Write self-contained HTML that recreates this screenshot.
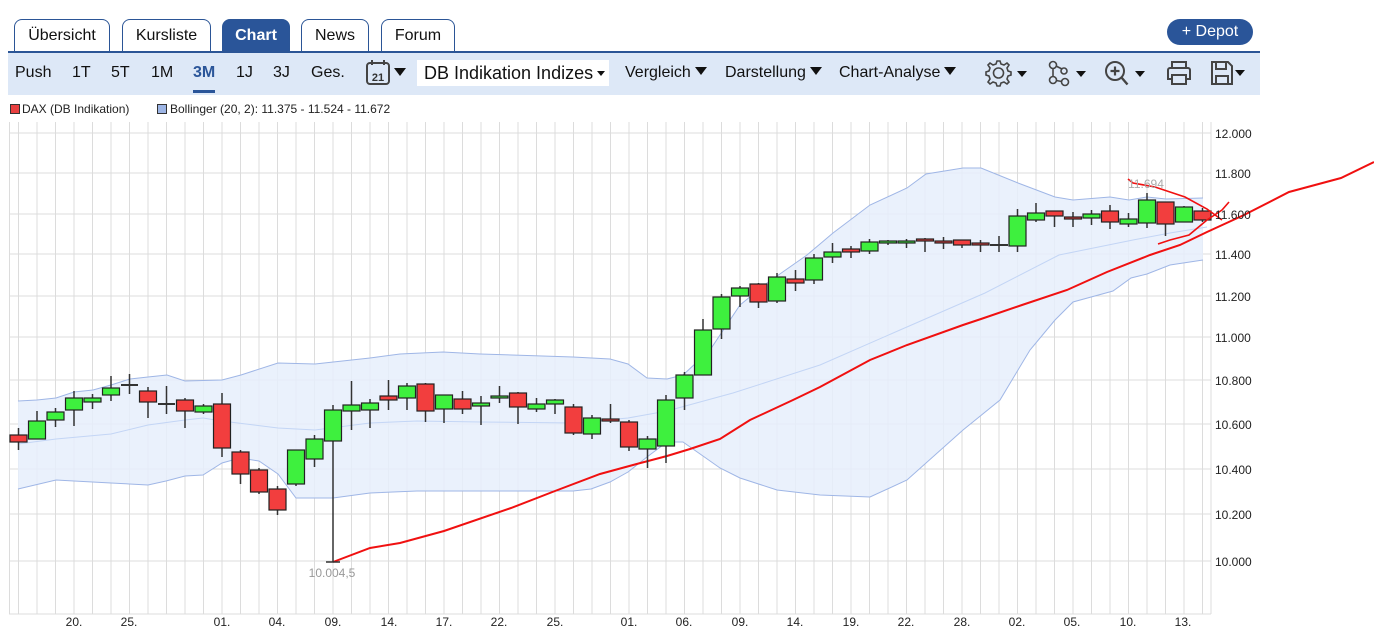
<!DOCTYPE html>
<html><head><meta charset="utf-8"><style>
body{margin:0;width:1374px;height:628px;background:#fff;font-family:"Liberation Sans",Arial,sans-serif;position:relative;overflow:hidden}
.tab{position:absolute;top:19px;height:32px;border:1px solid #2b5596;border-bottom:none;border-radius:8px 8px 0 0;background:#fff;font-size:16px;line-height:32px;text-align:center;color:#111;box-sizing:border-box}
.tab.on{background:#2a5599;color:#fff;font-weight:bold}
.bar{position:absolute;left:8px;top:51px;width:1252px;height:44px;background:#dde8f7;border-top:2px solid #2b5596;box-sizing:border-box}
.t{position:absolute;top:73px;transform:translateY(-50%);font-size:16px;color:#111}
.dd::after{content:"";display:inline-block;margin-left:4px;border-left:6px solid transparent;border-right:6px solid transparent;border-top:8px solid #111;vertical-align:2px}
</style></head><body>
<div class="tab" style="left:14px;width:96px">Übersicht</div>
<div class="tab" style="left:122px;width:89px">Kursliste</div>
<div class="tab on" style="left:222px;width:68px">Chart</div>
<div class="tab" style="left:301px;width:68px">News</div>
<div class="tab" style="left:381px;width:74px">Forum</div>
<div style="position:absolute;left:1167px;top:19px;width:86px;height:26px;border-radius:13px;background:#2a5599;color:#fff;font-size:16px;line-height:26px;text-align:center">+ Depot</div>
<div class="bar"></div>
<div class="t" style="left:15px">Push</div>
<div class="t" style="left:72px">1T</div>
<div class="t" style="left:111px">5T</div>
<div class="t" style="left:151px">1M</div>
<div class="t" style="left:193px;color:#2a5599;font-weight:bold">3M</div>
<div style="position:absolute;left:193px;top:90px;width:22px;height:3px;background:#2a5599"></div>
<div class="t" style="left:236px">1J</div>
<div class="t" style="left:273px">3J</div>
<div class="t" style="left:311px">Ges.</div>
<svg style="position:absolute;left:364px;top:59px" width="44" height="28" viewBox="0 0 44 28"><rect x="3" y="4" width="22" height="21" rx="3" fill="none" stroke="#444" stroke-width="2"/><line x1="8" y1="1" x2="8" y2="6" stroke="#444" stroke-width="2"/><line x1="20" y1="1" x2="20" y2="6" stroke="#444" stroke-width="2"/><text x="14" y="22" font-size="11" font-weight="bold" text-anchor="middle" fill="#333" font-family="Liberation Sans">21</text><path d="M30 9h12l-6 8z" fill="#111"/></svg>
<div style="position:absolute;left:417px;top:60px;width:192px;height:26px;background:#fff;font-size:18px;line-height:26px;padding-left:7px;box-sizing:border-box;color:#111">DB Indikation Indizes<span style="position:absolute;right:4px;top:11px;border-left:4px solid transparent;border-right:4px solid transparent;border-top:5px solid #111"></span></div>
<div class="t dd" style="left:625px">Vergleich</div>
<div class="t dd" style="left:725px">Darstellung</div>
<div class="t dd" style="left:839px">Chart-Analyse</div>
<svg style="position:absolute;left:984px;top:58px" width="275" height="30" viewBox="0 0 275 30" fill="none" stroke="#444" stroke-width="1.6">
<path d="M13 3l3 0 1 3 3 1 3-2 2 2-2 3 1 3 3 1v3l-3 1-1 3 2 3-2 2-3-2-3 1-1 3h-3l-1-3-3-1-3 2-2-2 2-3-1-3-3-1v-3l3-1 1-3-2-3 2-2 3 2 3-1z"/><circle cx="14.5" cy="15" r="5"/>
<path d="M33 13h10l-5 6z" fill="#111" stroke="none"/>
<circle cx="69" cy="7" r="3.5"/><circle cx="69" cy="22" r="3.5"/><circle cx="81" cy="24" r="3.5"/><circle cx="80" cy="13" r="3"/><path d="M69 10.5v8M72 22.5l6 1M72 8l6 3"/>
<path d="M92 13h10l-5 6z" fill="#111" stroke="none"/>
<circle cx="131" cy="13" r="9" stroke-width="2"/><path d="M137.5 19.5l6 7" stroke-width="2.4"/><path d="M131 8.5v9M126.5 13h9" stroke-width="2.2"/>
<path d="M151 13h10l-5 6z" fill="#111" stroke="none"/>
<path d="M188 10V4h14v6M186 10h18a2 2 0 0 1 2 2v9h-4M188 21h-4v-9a2 2 0 0 1 2-2M188 17h14v9h-14z" stroke-width="2"/>
<path d="M228 4h16l4 4v18h-20zM232 4v7h10V4M232 26v-8h12v8" stroke-width="2"/>
<path d="M251 12h10l-5 6z" fill="#111" stroke="none"/>
</svg>
<div style="position:absolute;left:10px;top:104px;width:8px;height:8px;background:#e84040;border:1px solid #333"></div>
<div style="position:absolute;left:22px;top:102px;font-size:12px;color:#222">DAX (DB Indikation)</div>
<div style="position:absolute;left:157px;top:104px;width:8px;height:8px;background:#9db5e5;border:1px solid #333"></div>
<div style="position:absolute;left:170px;top:102px;font-size:12px;color:#222">Bollinger (20, 2): 11.375 - 11.524 - 11.672</div>
<svg style="position:absolute;left:0;top:0" width="1374" height="628" viewBox="0 0 1374 628">
<g stroke="#dcdcdc" stroke-width="1">
<path d="M9 133H1211M9 173H1211M9 214H1211M9 254H1211M9 296H1211M9 337H1211M9 380H1211M9 424H1211M9 469H1211M9 514H1211M9 561H1211"/>
<path d="M9.5 122V614M18.5 122V614M37 122V614M55.5 122V614M74 122V614M92.5 122V614M111 122V614M129.5 122V614M148 122V614M166.5 122V614M185 122V614M203.5 122V614M222 122V614M240.5 122V614M259 122V614M277.5 122V614M296 122V614M314.5 122V614M333 122V614M351.5 122V614M370 122V614M388.5 122V614M407 122V614M425.5 122V614M444 122V614M462.5 122V614M481 122V614M499.5 122V614M518 122V614M536.5 122V614M555 122V614M573.5 122V614M592 122V614M610.5 122V614M629 122V614M647.5 122V614M666 122V614M684.5 122V614M703 122V614M721.5 122V614M740 122V614M758.5 122V614M777 122V614M795.5 122V614M814 122V614M832.5 122V614M851 122V614M869.5 122V614M888 122V614M906.5 122V614M925 122V614M943.5 122V614M962 122V614M980.5 122V614M999 122V614M1017.5 122V614M1036 122V614M1054.5 122V614M1073 122V614M1091.5 122V614M1110 122V614M1128.5 122V614M1147 122V614M1165.5 122V614M1184 122V614M1202.5 122V614M1211 122V614M9 614H1211"/>
</g>
<path fill="#e6eefc" fill-opacity="0.85" d="M18,401 37,400 56,398 74,392 93,390 111,385 130,379 148,377 167,375 185,381 222,380 241,375 278,363 315,364 370,358 400,354 443,352 480,354 573,357 610,359 628,364 647,378 667,379 683,375 710,350 740,305 767,283 807,255 833,233 870,205 907,188 926,174 963,168 981,168 1018,183 1055,197 1073,200 1110,197 1129,200 1147,197 1166,199 1203,198 L1203,260 1170,265 1147,274 1131,278 1113,291 1073,302 1055,320 1030,350 1000,400 963,430 907,480 870,497 820,495 777,490 740,478 720,468 683,442 667,442 647,457 628,472 610,482 591,489 573,491 417,491 370,493 333,498 296,498 278,474 259,461 240,458 222,463 203,475 185,476 166,481 148,485 111,483 74,481 56,480 18,489Z"/>
<g fill="none" stroke-width="1">
<polyline stroke="#9fb6e6" points="18,401 37,400 56,398 74,392 93,390 111,385 130,379 148,377 167,375 185,381 222,380 241,375 278,363 315,364 370,358 400,354 443,352 480,354 573,357 610,359 628,364 647,378 667,379 683,375 710,350 740,305 767,283 807,255 833,233 870,205 907,188 926,174 963,168 981,168 1018,183 1055,197 1073,200 1110,197 1129,200 1147,197 1166,199 1203,198"/>
<polyline stroke="#9fb6e6" points="18,489 56,480 74,481 111,483 148,485 166,481 185,476 203,475 222,463 240,458 259,461 278,474 296,498 333,498 370,493 417,491 573,491 591,489 610,482 628,472 647,457 667,442 683,442 720,468 740,478 777,490 820,495 870,497 907,480 963,430 1000,400 1030,350 1055,320 1073,302 1113,291 1131,278 1147,274 1170,265 1203,260"/>
<polyline stroke="#c3d5f5" points="18,444 56,439 111,434 148,425 185,420 203,418 222,421 278,428 315,430 370,423 417,421 480,422 573,423 628,418 667,411 733,393 820,365 900,330 985,293 1059,255 1133,240 1170,233 1207,227"/>
</g>
<polyline fill="none" stroke="#f01010" stroke-width="2" points="333,562 370,548 400,543 444,531 511,508 555,491 600,474 633,465 667,456 690,449 720,439 750,420 793,400 820,387 870,360 907,345 963,325 981,319 1022,305 1067,290 1107,272 1150,255 1180,245 1207,232 1244,215 1289,192 1341,178 1374,162"/>
<g stroke="#333" stroke-width="1.5">
<path d="M18.5 428V450M37 411V439M55.5 408V427M74 391V426M92.5 394V409M111 376V401M129.5 374V394M148 387V418M166.5 386V414M185 398V428M203.5 404V414M222 393V457M240.5 450V484M259 468V494M277.5 486V515M296 450V486M314.5 435V467M333 405V562M351.5 381V430M370 399V428M388.5 380V410M407 383V410M425.5 383V422M444 395V423M462.5 391V414M481 396V425M499.5 386V403M518 392V424M536.5 398V412M555 399V414M573.5 404V435M592 415V439M610.5 404V423M629 420V451M647.5 436V468M666 395V463M684.5 372V410M703 319V375M721.5 294V339M740 286V307M758.5 283V308M777 273V303M795.5 270V291M814 254V284M832.5 243V263M851 246V258M869.5 239V254M888 240V245M906.5 239V248M925 238V252M943.5 237V249M962 240V248M980.5 240V252M999 236V252M1017.5 209V252M1036 203V222M1054.5 211V227M1073 212V227M1091.5 210V225M1110 205V229M1128.5 213V227M1147 193V228M1165.5 202V236M1184 206V222M1202.5 208V222"/>
<path d="M121 385H138M158 404H175M990 245H1008" stroke-width="2"/>
<path d="M326 562H340"/>
</g>
<g stroke="#222" stroke-width="1.2">
<g fill="#f23e3e">
<rect x="10" y="435" width="17" height="7"/><rect x="139.5" y="391" width="17" height="11"/><rect x="176.5" y="400" width="17" height="11"/><rect x="213.5" y="404" width="17" height="44"/><rect x="232" y="452" width="17" height="22"/><rect x="250.5" y="470" width="17" height="22"/><rect x="269" y="489" width="17" height="21"/><rect x="380" y="396" width="17" height="4"/><rect x="417" y="384" width="17" height="27"/><rect x="454" y="399" width="17" height="10"/><rect x="509.5" y="393" width="17" height="14"/><rect x="565" y="407" width="17" height="26"/><rect x="602" y="419" width="17" height="2"/><rect x="620.5" y="422" width="17" height="25"/><rect x="750" y="284" width="17" height="18"/><rect x="787" y="279" width="17" height="4"/><rect x="842.5" y="249" width="17" height="3"/><rect x="916.5" y="239" width="17" height="2"/><rect x="935" y="241" width="17" height="2"/><rect x="953.5" y="240" width="17" height="5"/><rect x="972" y="243" width="17" height="2"/><rect x="1046" y="211" width="17" height="5"/><rect x="1064.5" y="217" width="17" height="2"/><rect x="1101.5" y="211" width="17" height="11"/><rect x="1157" y="202" width="17" height="22"/><rect x="1194" y="211" width="17" height="9"/>
</g>
<g fill="#3ef03e">
<rect x="28.5" y="421" width="17" height="18"/><rect x="47" y="412" width="17" height="8"/><rect x="65.5" y="398" width="17" height="12"/><rect x="84" y="398" width="17" height="4"/><rect x="102.5" y="388" width="17" height="7"/><rect x="195" y="406" width="17" height="6"/><rect x="287.5" y="450" width="17" height="34"/><rect x="306" y="439" width="17" height="20"/><rect x="324.5" y="410" width="17" height="31"/><rect x="343" y="405" width="17" height="6"/><rect x="361.5" y="403" width="17" height="7"/><rect x="398.5" y="386" width="17" height="12"/><rect x="435.5" y="395" width="17" height="14"/><rect x="472.5" y="403" width="17" height="3"/><rect x="491" y="396" width="17" height="2"/><rect x="528" y="404" width="17" height="5"/><rect x="546.5" y="400" width="17" height="4"/><rect x="583.5" y="418" width="17" height="16"/><rect x="639" y="439" width="17" height="10"/><rect x="657.5" y="400" width="17" height="46"/><rect x="676" y="375" width="17" height="23"/><rect x="694.5" y="330" width="17" height="45"/><rect x="713" y="297" width="17" height="32"/><rect x="731.5" y="288" width="17" height="8"/><rect x="768.5" y="277" width="17" height="24"/><rect x="805.5" y="258" width="17" height="22"/><rect x="824" y="252" width="17" height="5"/><rect x="861" y="242" width="17" height="9"/><rect x="879.5" y="241" width="17" height="2"/><rect x="898" y="241" width="17" height="2"/><rect x="1009" y="216" width="17" height="30"/><rect x="1027.5" y="213" width="17" height="7"/><rect x="1083" y="214" width="17" height="4"/><rect x="1120" y="219" width="17" height="5"/><rect x="1138.5" y="200" width="17" height="23"/><rect x="1175.5" y="207" width="17" height="15"/>
</g>
</g>
<g fill="none" stroke="#f01010" stroke-width="1.6">
<polyline points="1128,179 1133,183 1155,187 1185,197 1207,209 1222,220"/>
<polyline points="1158,244 1170,240 1189,235 1207,220 1222,210 1229,202"/>
</g>
<g font-family="Liberation Sans,Arial,sans-serif" font-size="12" fill="#222">
<text x="1215" y="138">12.000</text><text x="1215" y="178">11.800</text><text x="1215" y="219">11.600</text><text x="1215" y="259">11.400</text><text x="1215" y="301">11.200</text><text x="1215" y="342">11.000</text><text x="1215" y="385">10.800</text><text x="1215" y="429">10.600</text><text x="1215" y="474">10.400</text><text x="1215" y="519">10.200</text><text x="1215" y="566">10.000</text>
<g text-anchor="middle"><text x="74" y="626">20.</text><text x="129" y="626">25.</text><text x="222" y="626">01.</text><text x="277" y="626">04.</text><text x="333" y="626">09.</text><text x="389" y="626">14.</text><text x="444" y="626">17.</text><text x="499" y="626">22.</text><text x="555" y="626">25.</text><text x="629" y="626">01.</text><text x="684" y="626">06.</text><text x="740" y="626">09.</text><text x="795" y="626">14.</text><text x="851" y="626">19.</text><text x="906" y="626">22.</text><text x="962" y="626">28.</text><text x="1017" y="626">02.</text><text x="1072" y="626">05.</text><text x="1128" y="626">10.</text><text x="1183" y="626">13.</text></g>
<text x="332" y="577" text-anchor="middle" fill="#999">10.004,5</text>
<text x="1146" y="188" text-anchor="middle" fill="#aaa">11.694</text>
</g>
</svg>
</body></html>
